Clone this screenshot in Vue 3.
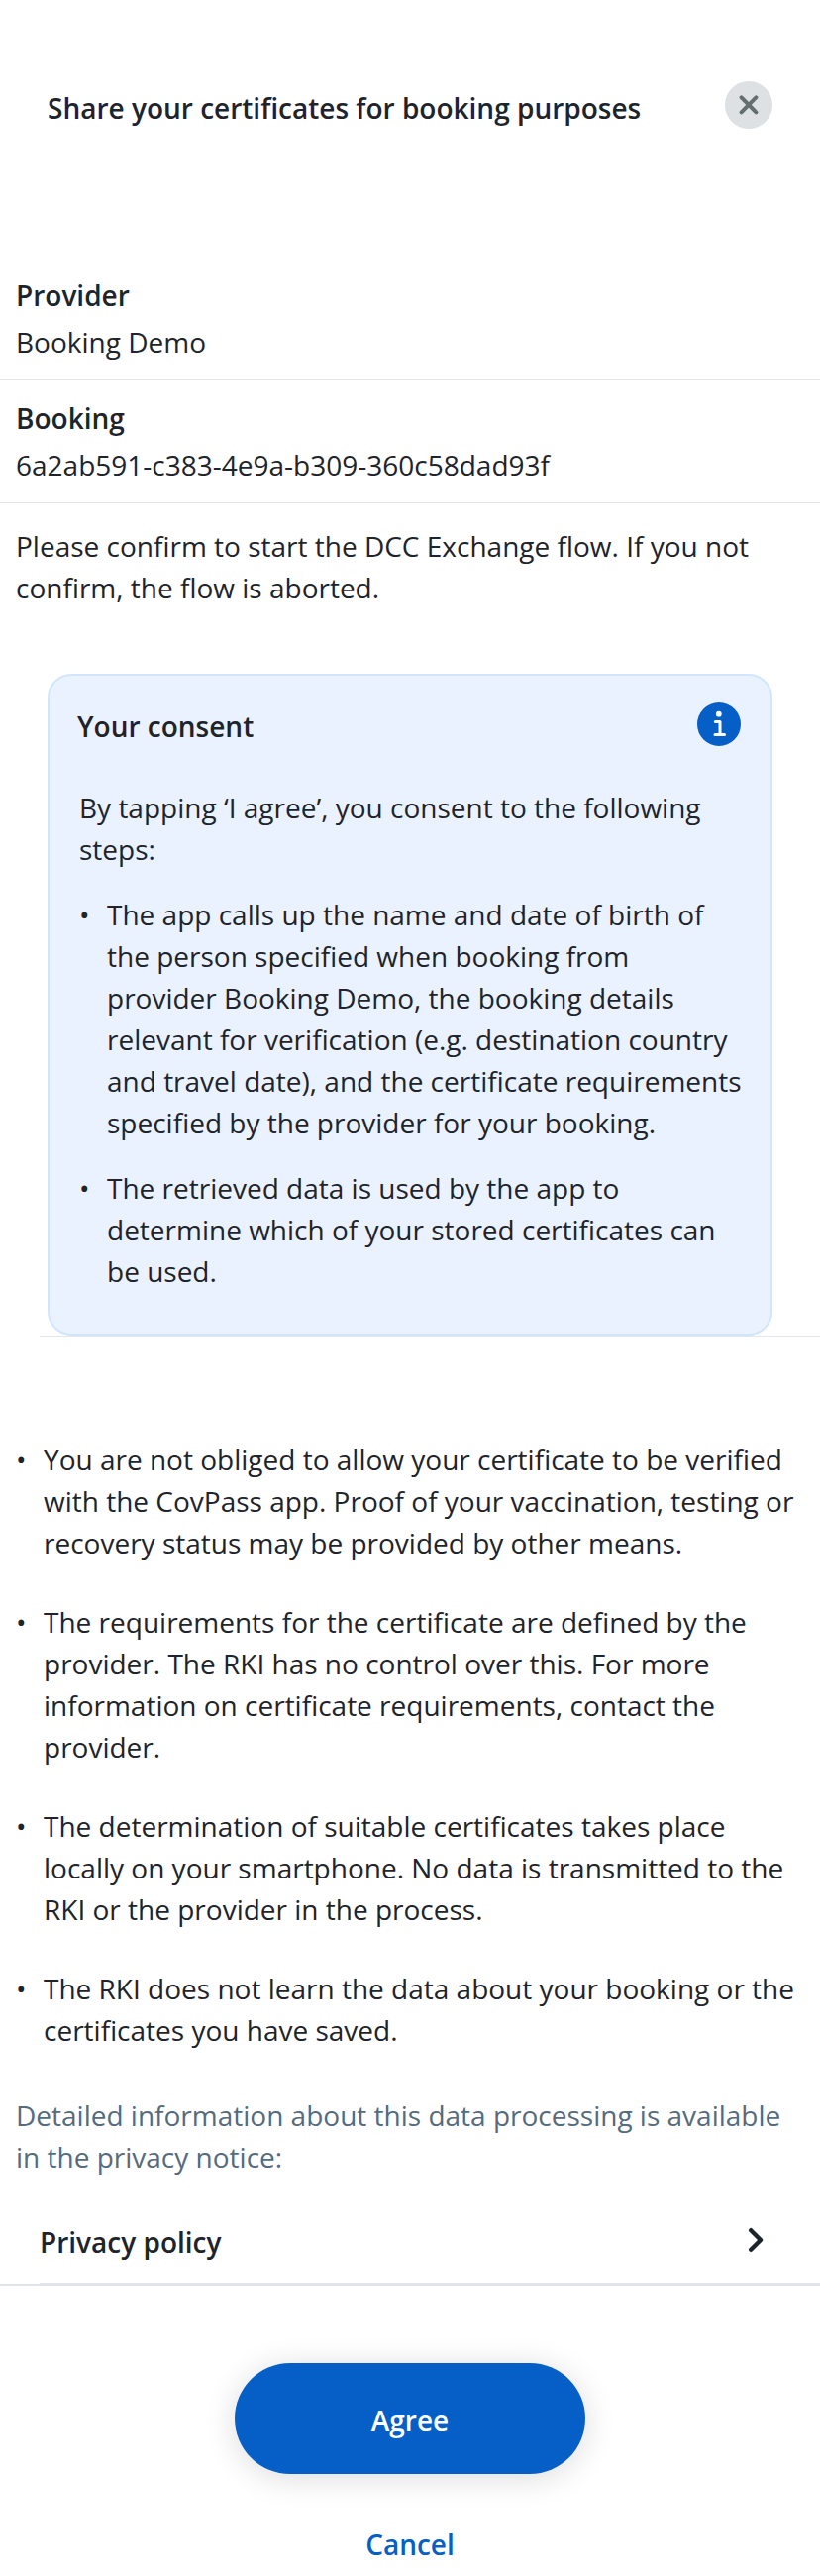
<script setup>
const fields = [
  { label: 'Provider', value: 'Booking Demo' },
  { label: 'Booking', value: '6a2ab591-c383-4e9a-b309-360c58dad93f' },
]
const steps = [
  ['The app calls up the name and date of birth of', 'the person specified when booking from', 'provider Booking Demo, the booking details', 'relevant for verification (e.g. destination country', 'and travel date), and the certificate requirements', 'specified by the provider for your booking.'],
  ['The retrieved data is used by the app to', 'determine which of your stored certificates can', 'be used.'],
]
const notes = [
  ['You are not obliged to allow your certificate to be verified', 'with the CovPass app. Proof of your vaccination, testing or', 'recovery status may be provided by other means.'],
  ['The requirements for the certificate are defined by the', 'provider. The RKI has no control over this. For more', 'information on certificate requirements, contact the', 'provider.'],
  ['The determination of suitable certificates takes place', 'locally on your smartphone. No data is transmitted to the', 'RKI or the provider in the process.'],
  ['The RKI does not learn the data about your booking or the', 'certificates you have saved.'],
]
</script>

<template>
  <main class="screen">
    <header class="head">
      <h1>Share your certificates for booking purposes</h1>
      <button class="close" aria-label="Close">
        <svg width="48" height="48" viewBox="0 0 48 48">
          <circle cx="24" cy="24" r="24" fill="#dde1e4" />
          <path d="M16.6 16.3 31.4 31.3M31.4 16.3 16.6 31.3" stroke="#636e6d" stroke-width="4" stroke-linecap="round" />
        </svg>
      </button>
    </header>

    <section v-for="f in fields" :key="f.label" class="field">
      <h2>{{ f.label }}</h2>
      <p>{{ f.value }}</p>
    </section>
    <p class="confirm">Please confirm to start the DCC Exchange flow. If you not<br />confirm, the flow is aborted.</p>

    <section class="card">
      <div class="card-head">
        <h2>Your consent</h2>
        <svg width="44" height="44" viewBox="0 0 44 44">
          <circle cx="22" cy="22" r="22" fill="#065fc6" />
          <circle cx="21.8" cy="11.7" r="2.9" fill="#fff" />
          <path d="M18.3 19.5H23V32.6M18 32.6H27.5" fill="none" stroke="#fff" stroke-width="3" stroke-linecap="round" stroke-linejoin="round" />
        </svg>
      </div>
      <p class="intro">By tapping ‘I agree’, you consent to the following<br />steps:</p>
      <ul class="steps">
        <li v-for="(s, i) in steps" :key="i">
          <span class="dot">•</span>
          <div><div v-for="l in s" :key="l">{{ l }}</div></div>
        </li>
      </ul>
    </section>
    <div class="rule"></div>

    <ul class="notes">
      <li v-for="(s, i) in notes" :key="i">
        <span class="dot">•</span>
        <div><div v-for="l in s" :key="l">{{ l }}</div></div>
      </li>
    </ul>
    <p class="detail">Detailed information about this data processing is available<br />in the privacy notice:</p>

    <a class="policy">
      <span>Privacy policy</span>
      <svg width="18" height="28" viewBox="0 0 18 28">
        <path d="M4.2 3.2 14 13 4.2 22.8" fill="none" stroke="#1e242b" stroke-width="4.4" stroke-linecap="round" stroke-linejoin="round" />
      </svg>
    </a>

    <footer class="foot">
      <button class="agree">Agree</button>
      <button class="cancel">Cancel</button>
    </footer>
  </main>
</template>

<style>
body { margin: 0; background: #fff; }
</style>

<style scoped>
.screen {
  box-sizing: border-box;
  width: 828px;
  height: 2600px;
  overflow: hidden;
  background: #fff;
  color: #1e242b;
  font: 400 28px/42px "Open Sans", "Noto Sans", sans-serif;
  white-space: nowrap;
}
h1, h2, p, ul { margin: 0; padding: 0; font-size: 28px; line-height: 42px; }
h1, h2 { font-weight: 600; }
button { padding: 0; border: 0; background: none; font: inherit; font-weight: 600; }
svg { display: block; flex: none; }
.head {
  display: flex;
  justify-content: space-between;
  align-items: flex-start;
  height: 178px;
  padding: 82px 48px 0;
}
.head h1 { margin-top: 6px; }
.close { width: 48px; height: 48px; }
.field {
  box-sizing: border-box;
  height: 124px;
  padding: 17px 16px 0;
  border-bottom: 1px solid #e4e5e7;
}
.field p { margin-top: 5px; }
.confirm { padding: 22px 16px 66px; }
.card {
  box-sizing: border-box;
  height: 668px;
  margin: 0 48px;
  padding: 27px 30px 0;
  border: 2px solid #d1e5fc;
  border-radius: 24px;
  background: #eaf2ff;
}
.card-head { display: flex; justify-content: space-between; height: 85px; }
.card-head h2 { margin: 3px 0 0 -2px; }
.intro { margin-bottom: 24px; }
li { display: flex; }
.dot { flex: none; width: 28px; }
.steps { display: grid; gap: 24px; }
.rule { height: 1px; margin-left: 40px; background: #e3e6ea; }
.notes { display: grid; gap: 38px; padding: 103px 16px 0; }
.detail { padding: 44px 16px 0; color: #556b7e; }
.policy {
  display: flex;
  justify-content: space-between;
  box-sizing: border-box;
  height: 63px;
  margin: 44px 0 0 40px;
  padding-right: 56px;
  border-bottom: 1px solid #e1e5eb;
  font-weight: 600;
}
.policy svg { margin-top: 6px; }
.foot {
  display: flex;
  flex-direction: column;
  align-items: center;
  padding-top: 78px;
  border-top: 2px solid #e1e5eb;
}
.agree {
  width: 354px;
  height: 112px;
  padding-top: 4px;
  border-radius: 56px;
  background: #065fc6;
  color: #fff;
  box-shadow: 0 4px 32px rgba(0, 0, 0, 0.14);
}
.cancel { height: 42px; margin-top: 50px; color: #065fc6; }
</style>
